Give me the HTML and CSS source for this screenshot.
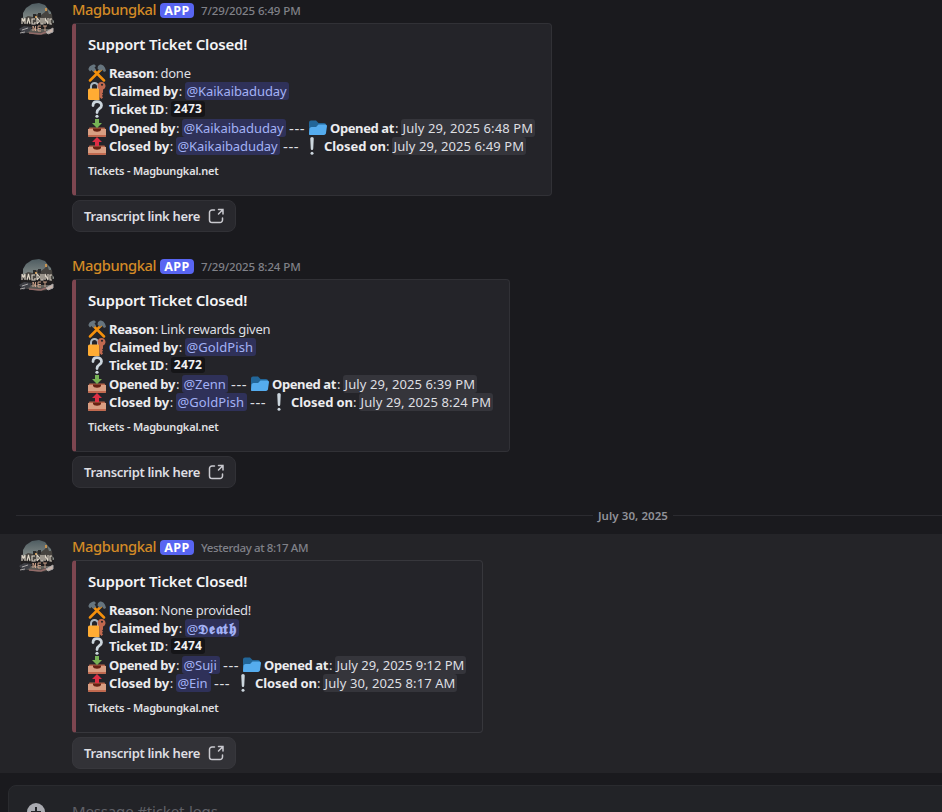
FILE: index.html
```html
<!DOCTYPE html>
<html lang="en">
<head>
<meta charset="utf-8">
<title>ticket-logs</title>
<link rel="stylesheet" href="styles.css">
</head>
<body>
<svg class="defs" width="0" height="0" aria-hidden="true">
  <defs>
    <linearGradient id="sky" x1="0" y1="0" x2="0" y2="1"><stop offset="0" stop-color="#4e5c61"/><stop offset=".6" stop-color="#8a918d"/><stop offset="1" stop-color="#4a443f"/></linearGradient>
    <symbol id="avatar" viewBox="0 0 40 40">
      <path d="M7 14 10 9 16 5 23 4 29 6 32 10 35 13 36 20 38 22 37 32 32 35 22 36 8 33 4 30 7 26Z" fill="url(#sky)"/>
      <path d="M7 20 12 17 17 18 21 15 25 16 29 13 31 10 33 15 36 15 37 25 7 25Z" fill="#46433f"/>
      <path d="M17 15h3v4h-3zM22 14h3v4h-3z" fill="#292a2b"/><path d="M29 9h2v3h-2zM19 17h2v2h-2z" fill="#c69352"/>
      <path d="M5 24h33v6H5z" fill="#211f20"/>
      <path d="M6 25v-6l1.500 3 1.500-3v6M11 25l1.500-6 1.500 6M19 20h-3v5h3v-2M21 25v-6l2.500 3-2.500 3M25 19v6h2v-6M29 25v-6l3 6v-6M36 20h-2v5h2" fill="none" stroke="#e0d8ca" stroke-width="1.1"/>
      <path d="M17 32v-5l2.500 5v-5M25 27h-3v5h3m-3-2.500h3M27 27h4m-2 0v5" fill="none" stroke="#d8aa91" stroke-width=".9"/>
      <path d="M3 30 8 27l8 1-2 4-7 3Z" fill="#3e3f45"/><path d="m6 31 6-2M4 34l5-1M30 33l7-4v4l-5 2Z" stroke="#aaa7a7" fill="#c9b5ac"/>
      <path d="M13 34l12 1 5-2" stroke="#936b69" stroke-width="1.5" fill="none"/>
    </symbol>
    <symbol id="tools" viewBox="0 0 36 36">
      <path d="M4 33 27 10M32 33 10 11" stroke="#f4900c" stroke-width="5" stroke-linecap="round"/>
      <path d="M1 11C1 6 6 1 13 1l3 3-3 3 3 4-5 5-4-4-3 3Z" fill="#66757f"/>
      <path d="M20 4 24 1C30 1 34 5 36 14L32 16 28 11 24 14 19 9Z" fill="#66757f"/>
    </symbol>
    <symbol id="lock" viewBox="0 0 36 36">
      <path d="M6 18V9a7 7 0 0 1 14 0v8" fill="none" stroke="#aab8c2" stroke-width="4"/>
      <path d="M0 16q0-3 3-3h20v23H3q-3 0-3-3Z" fill="#ffac33"/>
      <path d="M27 0c-5 0-8 4-8 8 0 3 1 5 4 7v15l4 4 3-3-2-3 2-3-2-2 2-2v-6c3-1 5-4 5-7 0-4-3-8-8-8Z" fill="#c1694f"/><circle cx="28" cy="5.500" r="2.2" fill="#242429"/>
    </symbol>
    <symbol id="question" viewBox="0 0 36 36">
      <path d="M10 11C10 6 13 3 18 3s9 3 9 8c0 7-9 6-9 14" fill="none" stroke="#ccd6dd" stroke-width="5.500" stroke-linecap="round"/><circle cx="18" cy="32.5" r="3.2" fill="#ccd6dd"/>
    </symbol>
    <symbol id="tray" viewBox="0 0 36 36">
      <path d="M3 17h30l3 5H0Z" fill="#b5664c"/><path d="M0 20h36v13q0 3-3 3H3q-3 0-3-3Z" fill="#d99e82"/><path d="M0 32h36v1q0 3-3 3H3q-3 0-3-3Z" fill="#c1694f"/><path d="M10 19h16v2c0 6-16 6-16 0Z" fill="#662113"/>
    </symbol>
    <symbol id="inbox" viewBox="0 0 36 36"><use href="#tray"/><path d="M14 0h8v8h6L18 18 8 8h6Z" fill="#77b255"/></symbol>
    <symbol id="outbox" viewBox="0 0 36 36"><use href="#tray"/><path d="M14 18h8v-8h6L18 0 8 10h6Z" fill="#dd2e44"/></symbol>
    <symbol id="folder" viewBox="0 0 36 36">
      <path d="M0 7q0-4 4-4h10l5 5h11q4 0 4 4v18H0Z" fill="#226699"/><path d="M1 19q1-3 4-3h9l5-5h14q3 0 3 3l-2 14q-1 4-4 4H1q-1 0-1-3Z" fill="#55acee"/>
    </symbol>
    <symbol id="bang" viewBox="0 0 36 36"><path d="M14.500 3q0-3 3.500-3t3.500 3l-1 20q0 3-2.500 3t-2.500-3Z" fill="#ccd6dd"/><circle cx="18" cy="32.500" r="3" fill="#ccd6dd"/></symbol>
    <symbol id="external" viewBox="0 0 18 18"><path d="M7.500 3H5A2.500 2.500 0 0 0 2.500 5.500v7.500A2.500 2.500 0 0 0 5 15.500h8a2.500 2.500 0 0 0 2.500-2.500V11M11.500 2.500h4.500V7M16 2.500l-4.500 4.500" fill="none" stroke="currentColor" stroke-width="1.500" stroke-linecap="round"/></symbol>
  </defs>
</svg>
<main class="channel">
  <article class="message">
    <svg class="avatar"><use href="#avatar"/></svg>
    <div class="body">
      <header class="head"><span class="name">Magbungkal</span><span class="tag">APP</span><time class="stamp">7/29/2025 6:49 PM</time></header>
      <section class="embed">
        <h3 class="title">Support Ticket Closed!</h3>
        <div class="row"><svg class="emoji"><use href="#tools"/></svg><span class="label reason"><b>Reason</b>:</span><span class="value">done</span></div>
        <div class="row"><svg class="emoji"><use href="#lock"/></svg><span class="label claimed"><b>Claimed by</b>:</span><span class="mention long">@Kaikaibaduday</span></div>
        <div class="row id-row"><svg class="emoji"><use href="#question"/></svg><span class="label ticket"><b>Ticket ID</b>:</span><code class="code">2473</code></div>
        <div class="row"><svg class="emoji"><use href="#inbox"/></svg><span class="label opened"><b>Opened by</b>:</span><span class="mention long">@Kaikaibaduday</span><span class="dashes">---</span><svg class="emoji"><use href="#folder"/></svg><span class="label opened-at"><b>Opened at</b>:</span><time class="date">July 29, 2025 6:48 PM</time></div>
        <div class="row"><svg class="emoji"><use href="#outbox"/></svg><span class="label closed"><b>Closed by</b>:</span><span class="mention long">@Kaikaibaduday</span><span class="dashes">---</span><svg class="emoji"><use href="#bang"/></svg><span class="label closed-on"><b>Closed on</b>:</span><time class="date">July 29, 2025 6:49 PM</time></div>
        <footer class="foot">Tickets - Magbungkal.net</footer>
      </section>
      <a class="button">Transcript link here<svg class="ext"><use href="#external"/></svg></a>
    </div>
  </article>

  <article class="message">
    <svg class="avatar"><use href="#avatar"/></svg>
    <div class="body">
      <header class="head"><span class="name">Magbungkal</span><span class="tag">APP</span><time class="stamp">7/29/2025 8:24 PM</time></header>
      <section class="embed">
        <h3 class="title">Support Ticket Closed!</h3>
        <div class="row"><svg class="emoji"><use href="#tools"/></svg><span class="label reason"><b>Reason</b>:</span><span class="value">Link rewards given</span></div>
        <div class="row"><svg class="emoji"><use href="#lock"/></svg><span class="label claimed"><b>Claimed by</b>:</span><span class="mention gold">@GoldPish</span></div>
        <div class="row id-row"><svg class="emoji"><use href="#question"/></svg><span class="label ticket"><b>Ticket ID</b>:</span><code class="code">2472</code></div>
        <div class="row"><svg class="emoji"><use href="#inbox"/></svg><span class="label opened"><b>Opened by</b>:</span><span class="mention zenn">@Zenn</span><span class="dashes">---</span><svg class="emoji"><use href="#folder"/></svg><span class="label opened-at"><b>Opened at</b>:</span><time class="date">July 29, 2025 6:39 PM</time></div>
        <div class="row"><svg class="emoji"><use href="#outbox"/></svg><span class="label closed"><b>Closed by</b>:</span><span class="mention gold">@GoldPish</span><span class="dashes">---</span><svg class="emoji"><use href="#bang"/></svg><span class="label closed-on"><b>Closed on</b>:</span><time class="date">July 29, 2025 8:24 PM</time></div>
        <footer class="foot">Tickets - Magbungkal.net</footer>
      </section>
      <a class="button">Transcript link here<svg class="ext"><use href="#external"/></svg></a>
    </div>
  </article>

  <div class="divider"><span>July 30, 2025</span></div>

  <article class="message hovered">
    <svg class="avatar"><use href="#avatar"/></svg>
    <div class="body">
      <header class="head"><span class="name">Magbungkal</span><span class="tag">APP</span><time class="stamp relative">Yesterday at 8:17 AM</time></header>
      <section class="embed">
        <h3 class="title">Support Ticket Closed!</h3>
        <div class="row"><svg class="emoji"><use href="#tools"/></svg><span class="label reason"><b>Reason</b>:</span><span class="value">None provided!</span></div>
        <div class="row"><svg class="emoji"><use href="#lock"/></svg><span class="label claimed"><b>Claimed by</b>:</span><span class="mention death">@<span class="fraktur">𝕯𝖊𝖆𝖙𝖍</span></span></div>
        <div class="row id-row"><svg class="emoji"><use href="#question"/></svg><span class="label ticket"><b>Ticket ID</b>:</span><code class="code">2474</code></div>
        <div class="row"><svg class="emoji"><use href="#inbox"/></svg><span class="label opened"><b>Opened by</b>:</span><span class="mention suji">@Suji</span><span class="dashes">---</span><svg class="emoji"><use href="#folder"/></svg><span class="label opened-at"><b>Opened at</b>:</span><time class="date narrow">July 29, 2025 9:12 PM</time></div>
        <div class="row"><svg class="emoji"><use href="#outbox"/></svg><span class="label closed"><b>Closed by</b>:</span><span class="mention ein">@Ein</span><span class="dashes">---</span><svg class="emoji"><use href="#bang"/></svg><span class="label closed-on"><b>Closed on</b>:</span><time class="date">July 30, 2025 8:17 AM</time></div>
        <footer class="foot">Tickets - Magbungkal.net</footer>
      </section>
      <a class="button">Transcript link here<svg class="ext"><use href="#external"/></svg></a>
    </div>
  </article>

  <div class="composer">
    <svg class="plus" viewBox="0 0 18 18"><circle cx="9" cy="9" r="9" fill="#a9aab0"/><path d="M9 4v10M4 9h10" stroke="#222327" stroke-width="2"/></svg>
    <span class="placeholder">Message #ticket-logs</span>
  </div>
</main>
</body>
</html>
```
FILE: styles.css
```css
* { box-sizing: border-box; }
html, body { height: 812px; overflow: hidden; }
body { margin: 0; background: #1a1a1e; color: #dedfe2; font: 13px "Noto Sans", sans-serif; }
.defs { position: absolute; }
.channel { margin-top: -3px; white-space: nowrap; }

.message { display: flex; gap: 16px; height: 239px; padding-left: 16px; margin-bottom: 17px; }
.hovered { background: #242428; margin-bottom: 12px; }
.avatar { width: 40px; height: 40px; margin-top: 2px; flex: none; }
.body { display: flex; flex-direction: column; align-items: flex-start; }

.head { display: flex; align-items: center; height: 26px; }
.name { width: 84px; padding-bottom: 2px; font-size: 14.7px; font-weight: 500; letter-spacing: -.42px; color: #d38a26; }
.tag { width: 34px; height: 15px; margin-left: 4px; border-radius: 4px; background: #5865f2; color: #fff; font-size: 12.5px; font-weight: 700; line-height: 15px; text-align: center; letter-spacing: .4px; }
.stamp { margin-left: 7px; font-size: 11.5px; font-weight: 500; letter-spacing: -.1px; color: #808188; }
.relative { letter-spacing: -.38px; }

.embed { height: 173px; padding: 9px 16px 0 12px; border: 1px solid #313136; border-left: 4px solid #7d4650; border-radius: 4px; background: #242429; }
.title { margin: 0 0 9px; font-size: 15px; font-weight: 600; line-height: 22px; letter-spacing: -.17px; color: #f4f4f6; }
.row { display: flex; align-items: center; gap: 3px; height: 18.3px; line-height: 18px; }
.id-row { padding-bottom: 1px; }
.emoji { width: 18px; height: 18px; flex: none; }
.label { display: flex; justify-content: space-between; letter-spacing: -.35px; }
.label b { color: #ececef; }
.reason { width: 49px; }
.claimed { width: 73px; letter-spacing: -.23px; }
.ticket { width: 59px; letter-spacing: -.27px; }
.opened { width: 70px; letter-spacing: -.39px; }
.closed { width: 64px; letter-spacing: -.17px; }
.opened-at { width: 68px; letter-spacing: -.39px; }
.closed-on { width: 65px; letter-spacing: -.1px; }
.value { margin-left: -.5px; letter-spacing: -.25px; }
.mention, .date, .code { height: 18px; padding: 0 1.5px; border-radius: 3px; }
.mention { background: #2f3159; color: #a3b1f6; letter-spacing: -.08px; }
.long { width: 104px; }
.gold { width: 71px; letter-spacing: .1px; }
.zenn { width: 46px; }
.suji { width: 38px; }
.ein { width: 35px; }
.death { width: 54px; }
.fraktur { font-size: 14.5px; font-weight: 700; letter-spacing: .7px; }
.date { width: 134px; background: #35353b; letter-spacing: .09px; }
.narrow { width: 131px; letter-spacing: -.04px; }
.code { width: 34px; height: 16px; padding: 0; background: #151518; color: #f0f0f2; font: 700 12px/16px "Noto Sans", sans-serif; text-align: center; letter-spacing: .2px; }
.dashes { width: 17px; font-size: 15px; letter-spacing: .6px; }
.foot { margin-top: 7.5px; font-size: 11px; font-weight: 600; line-height: 16px; letter-spacing: -.2px; color: #e0e0e3; }

.button { display: flex; align-items: center; gap: 7px; width: 164px; height: 32px; margin-top: 4px; padding-left: 11px; border: 1px solid #313136; border-radius: 8px; background: #28282d; font-weight: 600; letter-spacing: -.33px; color: #dedee2; }
.ext { width: 18px; height: 18px; color: #c9c9cf; }
.hovered .embed { border-color: #37373c #37373c #37373c #7d4650; }
.hovered .button { border-color: #37373c; background: #323237; }

.divider { display: flex; align-items: center; gap: 5px; height: 14px; margin: -1px 0 12px 16px; font-size: 11.5px; font-weight: 600; letter-spacing: .07px; color: #919299; }
.divider::before, .divider::after { content: ""; height: 1px; background: #2b2b30; }
.divider::before { width: 577px; }
.divider::after { flex: 1; }

.composer { display: flex; align-items: center; gap: 27px; height: 56px; margin: 0 -10px 0 8px; padding-left: 18px; border: 1px solid #2a2b2f; border-radius: 8px; background: #222327; color: #606168; font-size: 15px; }
.plus { width: 18px; height: 18px; margin-top: -2px; }
.placeholder { padding-bottom: 5px; letter-spacing: -.15px; }
```
